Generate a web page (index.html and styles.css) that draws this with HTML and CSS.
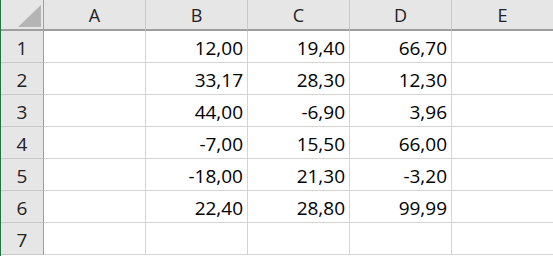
FILE: index.html
```html
<!DOCTYPE html>
<html>
<head>
<meta charset="utf-8">
<link rel="stylesheet" href="styles.css">
</head>
<body>
<div class="sheet">
  <div class="grid">
    <div class="corner"><svg class="tri" width="23" height="22" viewBox="0 0 23 22"><polygon points="23,0 23,22 0,22" fill="#b4b4b4"/></svg></div>
    <div class="colhead">A</div>
    <div class="colhead">B</div>
    <div class="colhead">C</div>
    <div class="colhead">D</div>
    <div class="colhead">E</div>

    <div class="rowhead">1</div><div class="cell"></div><div class="cell">12,00</div><div class="cell">19,40</div><div class="cell">66,70</div><div class="cell"></div>
    <div class="rowhead">2</div><div class="cell"></div><div class="cell">33,17</div><div class="cell">28,30</div><div class="cell">12,30</div><div class="cell"></div>
    <div class="rowhead">3</div><div class="cell"></div><div class="cell">44,00</div><div class="cell">-6,90</div><div class="cell">3,96</div><div class="cell"></div>
    <div class="rowhead">4</div><div class="cell"></div><div class="cell">-7,00</div><div class="cell">15,50</div><div class="cell">66,00</div><div class="cell"></div>
    <div class="rowhead">5</div><div class="cell"></div><div class="cell">-18,00</div><div class="cell">21,30</div><div class="cell">-3,20</div><div class="cell"></div>
    <div class="rowhead">6</div><div class="cell"></div><div class="cell">22,40</div><div class="cell">28,80</div><div class="cell">99,99</div><div class="cell"></div>
    <div class="rowhead">7</div><div class="cell"></div><div class="cell"></div><div class="cell"></div><div class="cell"></div><div class="cell"></div>
  </div>
</div>
</body>
</html>
```
FILE: styles.css
```css
html, body {
  margin: 0;
  padding: 0;
  background: #ffffff;
  overflow: hidden;
}
.sheet {
  width: 553px;
  height: 256px;
  overflow: hidden;
  border-left: 1px solid #217346;
  box-sizing: border-box;
  font-family: "Open Sans", "Noto Sans", sans-serif;
}
.grid {
  display: grid;
  grid-template-columns: 43px repeat(5, 102px);
  grid-template-rows: 31px repeat(7, 32px);
}
.corner, .colhead, .rowhead {
  background: #e6e6e6;
  color: #222222;
  box-sizing: border-box;
}
.corner {
  border-right: 1px solid #9e9e9e;
  border-bottom: 2px solid #9e9e9e;
  display: flex;
  align-items: flex-end;
  justify-content: flex-end;
  padding: 0 2px 2px 0;
}
.tri {
  display: block;
}
.colhead {
  border-right: 1px solid #c8c8c8;
  border-bottom: 2px solid #9e9e9e;
  display: flex;
  align-items: center;
  justify-content: center;
  font-size: 18px;
  padding-top: 1px;
}
.rowhead {
  border-right: 1px solid #9e9e9e;
  border-bottom: 1px solid #c8c8c8;
  display: flex;
  align-items: center;
  justify-content: center;
  font-size: 19px;
  padding-top: 2px;
}
.cell {
  box-sizing: border-box;
  border-right: 1px solid #d4d4d4;
  border-bottom: 1px solid #d4d4d4;
  display: flex;
  align-items: center;
  justify-content: flex-end;
  padding: 2px 4px 0 0;
  font-size: 19px;
  color: #000000;
}
```
